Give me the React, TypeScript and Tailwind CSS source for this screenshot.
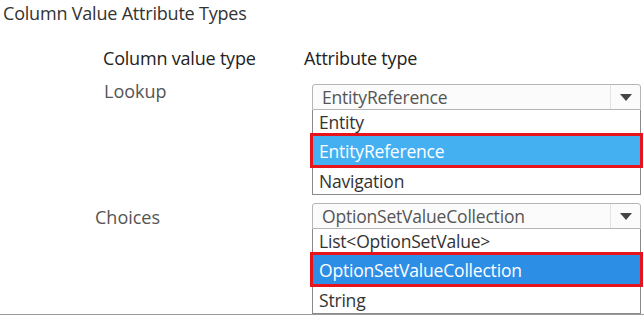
type Option = { label: string; selected?: boolean };

const rows = [
    {
        label: 'Lookup',
        indent: 'pl-[104px]',
        value: 'EntityReference',
        options: [
            { label: 'Entity' },
            { label: 'EntityReference', selected: true },
            { label: 'Navigation' },
        ] as Option[],
        highlight: 'bg-[#44b0f2]',
    },
    {
        label: 'Choices',
        indent: 'pl-[95px]',
        value: 'OptionSetValueCollection',
        options: [
            { label: 'List<OptionSetValue>' },
            { label: 'OptionSetValueCollection', selected: true },
            { label: 'String' },
        ] as Option[],
        highlight: 'bg-[#2d8ee6]',
    },
];

function Dropdown({ value, options, highlight }: { value: string; options: Option[]; highlight: string }) {
    return (
        <div className="w-[329px] text-[17.5px] leading-[22px] tracking-[-0.2px]">
            <div className="flex h-[26px] items-stretch rounded-t-[3px] border border-[#b5b5b5] bg-[#fbfbfb]">
                <div className="flex-1 flex items-center px-[9px] text-[#555]">{value}</div>
                <div className="w-[30px] flex items-center justify-center border-l border-[#e2e2e2]">
                    <svg width="12" height="7" viewBox="0 0 12 7">
                        <path d="M0 0 L12 0 L6 7 Z" fill="#444" />
                    </svg>
                </div>
            </div>
            <div className="border-x border-b border-[#8a8a8a] bg-white">
                {options.map((o, i) =>
                    o.selected ? (
                        <div
                            key={o.label}
                            className={`-mx-[3px] h-[35px] flex items-center border-[3px] border-[#e8141b] px-[6px] text-white ${highlight}`}
                        >
                            {o.label}
                        </div>
                    ) : (
                        <div
                            key={o.label}
                            className={`${i === 0 ? 'h-[23px]' : 'h-[26px]'} flex items-center px-[6px] text-[#333]`}
                        >
                            {o.label}
                        </div>
                    )
                )}
            </div>
        </div>
    );
}

export default function App() {
    return (
        <div
            className="w-[644px] h-[315px] bg-white overflow-hidden border-b border-[#9a9a9a] text-[18px] leading-[24px]"
            style={{ fontFamily: '"Open Sans", "Noto Sans", sans-serif' }}
        >
            <div className="pl-[3px] pt-[1px] text-[18px] text-[#333] tracking-[-0.2px]">Column Value Attribute Types</div>

            <div className="mt-[21px] flex text-[#222] tracking-[-0.2px]">
                <div className="w-[304px] pl-[103px]">Column value type</div>
                <div>Attribute type</div>
            </div>

            <div className="mt-[9px] flex">
                <div className={`w-[312px] ${rows[0].indent} text-[#555]`}>{rows[0].label}</div>
                <div className="pt-[5px]">
                    <Dropdown value={rows[0].value} options={rows[0].options} highlight={rows[0].highlight} />
                </div>
            </div>

            <div className="mt-[8px] flex">
                <div className={`w-[312px] ${rows[1].indent} text-[#555] pt-[2px]`}>{rows[1].label}</div>
                <Dropdown value={rows[1].value} options={rows[1].options} highlight={rows[1].highlight} />
            </div>
        </div>
    );
}
